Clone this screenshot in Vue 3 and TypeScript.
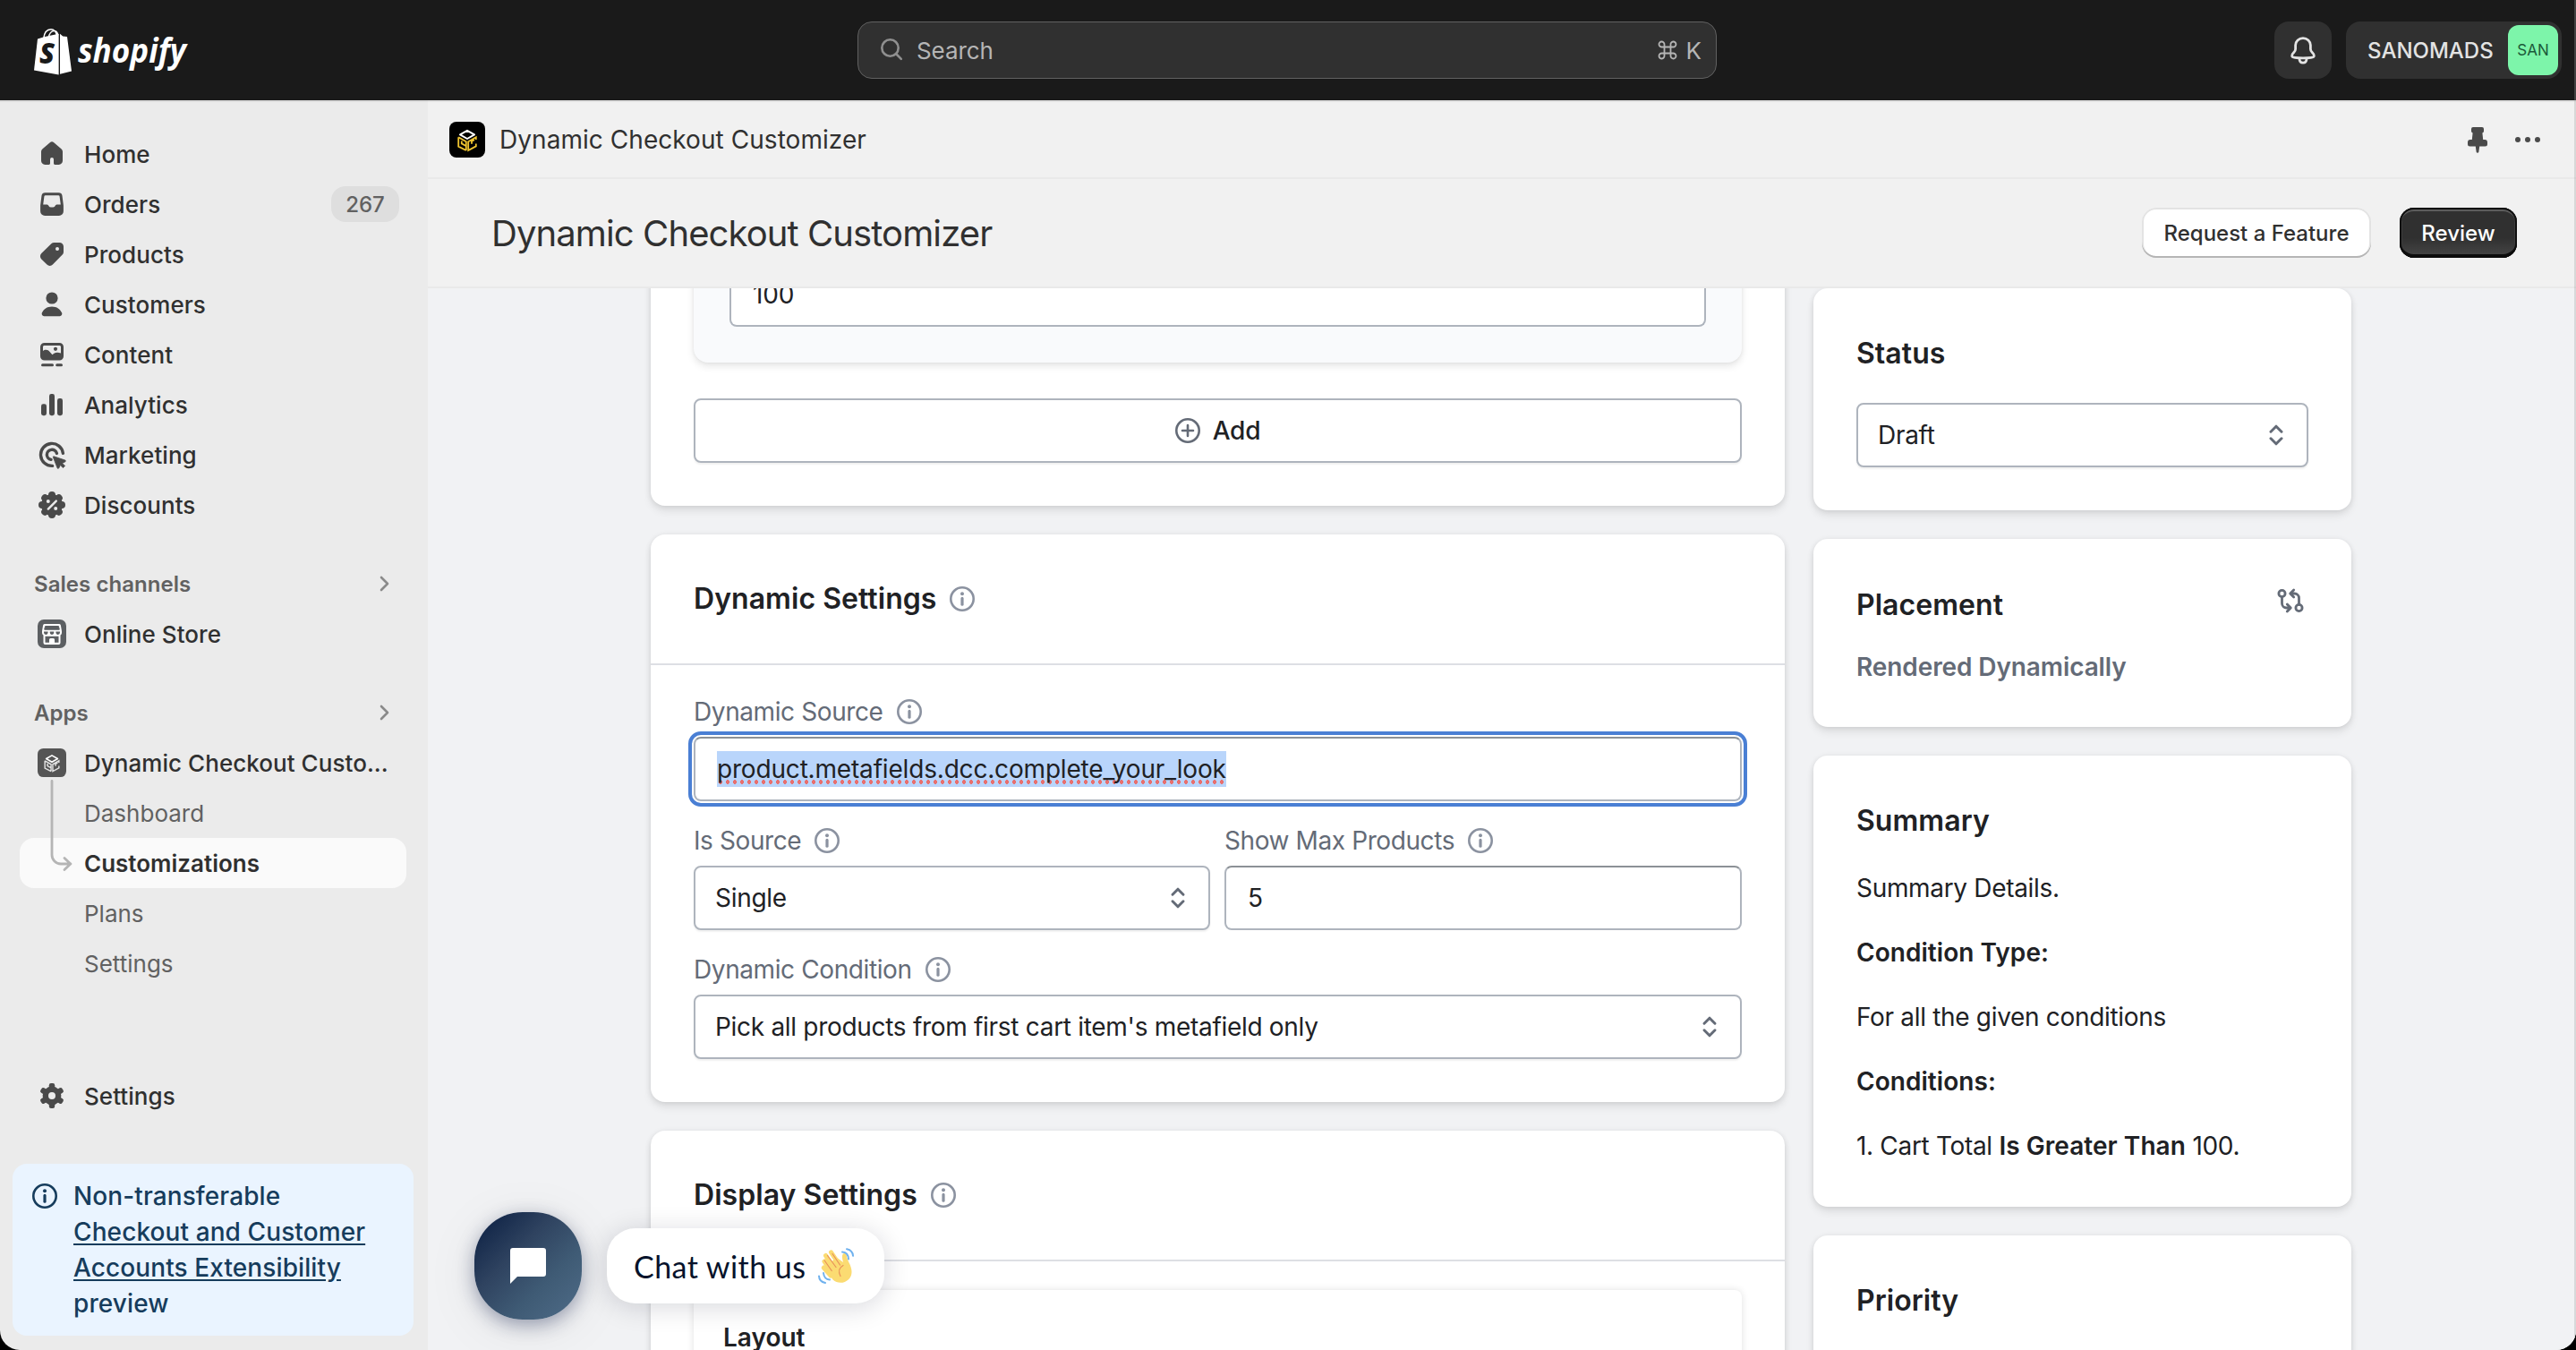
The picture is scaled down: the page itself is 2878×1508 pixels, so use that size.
<script setup lang="ts">
interface NavItem {
  label: string
  icon: string
  badge?: string
}

const nav: NavItem[] = [
  { label: 'Home', icon: 'home' },
  { label: 'Orders', icon: 'orders', badge: '267' },
  { label: 'Products', icon: 'products' },
  { label: 'Customers', icon: 'customers' },
  { label: 'Content', icon: 'content' },
  { label: 'Analytics', icon: 'analytics' },
  { label: 'Marketing', icon: 'marketing' },
  { label: 'Discounts', icon: 'discounts' },
]

const appLinks: { label: string; active?: boolean }[] = [
  { label: 'Dashboard' },
  { label: 'Customizations', active: true },
  { label: 'Plans' },
  { label: 'Settings' },
]

const teeth = [0, 60, 120, 180, 240, 300]
const scallops = [0, 45, 90, 135, 180, 225, 270, 315]
</script>

<template>
  <div class="window">
    <svg class="defs" width="0" height="0" aria-hidden="true">
      <defs>
        <symbol id="i-info" viewBox="0 0 28 28">
          <circle cx="14" cy="14" r="12.7" fill="none" stroke="currentColor" stroke-width="2.6" />
          <circle cx="14" cy="8.2" r="2" fill="currentColor" />
          <rect x="12.4" y="11.8" width="3.2" height="10" rx="1.6" fill="currentColor" />
        </symbol>
        <symbol id="i-updown" viewBox="0 0 20 28">
          <path d="M4 10.2 10 4.2l6 6M4 17.8l6 6 6-6" fill="none" stroke="currentColor" stroke-width="3" stroke-linecap="round" stroke-linejoin="round" />
        </symbol>
        <symbol id="i-chevron" viewBox="0 0 12 18">
          <path d="M2 2l7 7-7 7" fill="none" stroke="currentColor" stroke-width="2.6" stroke-linecap="round" stroke-linejoin="round" />
        </symbol>
        <symbol id="i-cube" viewBox="0 0 40 40">
          <path class="lid" d="M20 9.8l8 4.6-8 4.6-8-4.6z" fill="none" stroke-width="2" stroke-linejoin="round" />
          <path class="side" d="M10.2 17.2v10.4L18.8 32M10.2 17.2l8.6 5V32M18.6 27l-4.8-2.6v-3M29.8 20v-2.8l-8.600 5V32l8.600-4.600v-3M25 24.800v-3l3-1.600" fill="none" stroke-width="1.800" />
        </symbol>
      </defs>
    </svg>

    <header class="topbar">
      <div class="logo">
        <svg width="176" height="56" viewBox="0 0 176 56">
          <path d="M4 11.6l8-2.6 15.6-3.2v45.6L0 46.6z" fill="#fff" />
          <path d="M29 5.8l3.2 2.8 4.8.4L42 47.6l-13 3.2z" fill="#fff" />
          <path d="M10.6 11.6C11.4 4 15 .8 19 .8c3.400 0 5.600 2.600 6.600 7M16.400 10C17 5.400 19.600 2.600 22.400 2.600c2.400 0 3.800 1.800 4.400 4.800" fill="none" stroke="#fff" stroke-width="1.500" />
          <text x="6" y="39" font-family="'Open Sans', sans-serif" font-weight="800" font-style="italic" font-size="32" textLength="17" lengthAdjust="spacingAndGlyphs" fill="#1a1a1a">S</text>
          <text x="49" y="38" font-family="'Open Sans', sans-serif" font-weight="700" font-style="italic" font-size="37.500" textLength="121" lengthAdjust="spacingAndGlyphs" fill="#fff">shopify</text>
        </svg>
      </div>
      <div class="search">
        <svg width="28" height="28" viewBox="0 0 28 28">
          <circle cx="11.500" cy="11.500" r="9.200" fill="none" stroke="#8f8f8f" stroke-width="2.600" />
          <path d="M18.500 18.500l5.300 5.300" stroke="#8f8f8f" stroke-width="2.600" stroke-linecap="round" />
        </svg>
        <span class="search-label">Search</span>
        <svg class="cmd" width="22" height="22" viewBox="0 0 22 22">
          <path d="M7.500 7.500h7v7h-7zM7.500 7.500H4.800a3 3 0 1 1 2.700-3zM14.500 7.500V4.800a3 3 0 1 1 3 2.700zM14.500 14.500h2.700a3 3 0 1 1-2.700 3zM7.500 14.500v2.700a3 3 0 1 1-3-2.700z" fill="none" stroke="#b5b5b5" stroke-width="1.800" />
        </svg>
        <span class="key">K</span>
      </div>
      <div class="top-actions">
        <div class="bell">
          <svg width="40" height="40" viewBox="0 0 40 40">
            <path d="M20 6.600c-4.800 0-8.400 3.600-8.400 8v4.200c0 1.600-.6 2.600-1.800 3.800-1.600 1.600-2.400 2.600-2.200 3.800.2 1.400 1.400 1.800 3.400 2 3 .4 6 .5 9 .5s6-.1 9-.5c2-.2 3.200-.6 3.400-2 .2-1.200-.6-2.200-2.200-3.800-1.200-1.200-1.800-2.200-1.800-3.800v-4.200c0-4.400-3.600-8-8.400-8z" fill="none" stroke="#e3e3e3" stroke-width="2.800" stroke-linejoin="round" />
            <path d="M16 29.500c0 3 1.700 4.700 4 4.700s4-1.700 4-4.700" fill="none" stroke="#e3e3e3" stroke-width="2.800" />
          </svg>
        </div>
        <div class="account">
          <span>SANOMADS</span>
          <div class="avatar">SAN</div>
        </div>
      </div>
    </header>

    <div class="body">
      <aside class="sidebar">
        <div v-for="item in nav" :key="item.label" class="nav-row">
          <svg class="nav-icon" viewBox="0 0 20 20" fill="currentColor">
            <path v-if="item.icon === 'home'" d="M8.900 3.600a1.700 1.700 0 0 1 2.200 0l4.100 3.500c.5.400.8 1 .8 1.700v5c0 1.200-.9 2.200-2.200 2.200h-2.100a.7.700 0 0 1-.7-.7v-2.300a1 1 0 0 0-2 0v2.300a.7.700 0 0 1-.7.700H6.200C4.900 16 4 15 4 13.800v-5c0-.7.3-1.300.8-1.700z" />
            <path v-else-if="item.icon === 'orders'" fill-rule="evenodd" d="M6.200 3.600h7.600a2 2 0 0 1 1.950 1.600l.7 5.500v3.300a2.500 2.500 0 0 1-2.500 2.500h-7.900a2.500 2.500 0 0 1-2.500-2.500v-3.300l.7-5.500a2 2 0 0 1 1.950-1.600zM6.400 5.100a.7.700 0 0 0-.7.600l-.6 4.600h1.900c.6 0 1 .3 1.300.8.200.4.500.6 1 .6h1.400c.5 0 .8-.2 1-.6.300-.5.700-.8 1.300-.8h1.900l-.6-4.600a.7.700 0 0 0-.7-.6z" />
            <path v-else-if="item.icon === 'products'" fill-rule="evenodd" d="M11.300 3.500h2.950a2.250 2.250 0 0 1 2.250 2.250v2.950a2.250 2.250 0 0 1-.66 1.590l-5.400 5.500a2.250 2.250 0 0 1-3.200 0l-3.100-3.100a2.250 2.250 0 0 1 0-3.200l5.500-5.340a2.250 2.250 0 0 1 1.660-.65zM13 6a1 1 0 1 0 0 2 1 1 0 0 0 0-2z" />
            <g v-else-if="item.icon === 'customers'">
              <circle cx="10" cy="6.500" r="3.300" />
              <path d="M10 11.200c2.700 0 4.700 1.400 5.600 3.600.3.900-.3 1.800-1.200 1.800H5.600c-.9 0-1.500-.9-1.200-1.800.9-2.200 2.900-3.600 5.600-3.600z" />
            </g>
            <g v-else-if="item.icon === 'content'">
              <path fill-rule="evenodd" d="M5.800 3.500h8.400a2.300 2.300 0 0 1 2.300 2.300v5.200a2.300 2.300 0 0 1-2.300 2.300H5.800a2.300 2.300 0 0 1-2.300-2.300V5.800a2.300 2.300 0 0 1 2.300-2.300zM5.800 5c-.5 0-.8.3-.8.800v2.200c.5-.4 1-.6 1.700-.6.900 0 1.500.4 2.100 1.100l1.400 1.600 1-.7c1-.7 2.300-.8 3.800-.1V5.800c0-.5-.3-.8-.8-.8z" />
              <circle cx="12" cy="6.900" r="1.050" />
              <rect x="4" y="15.100" width="7" height="1.500" rx=".75" />
              <rect x="12.100" y="15.100" width="3.900" height="1.500" rx=".75" />
            </g>
            <g v-else-if="item.icon === 'analytics'">
              <rect x="4" y="9.600" width="3" height="6.500" rx="1.200" />
              <rect x="8.500" y="4" width="3" height="12.100" rx="1.200" />
              <rect x="13" y="6.500" width="3" height="9.600" rx="1.200" />
            </g>
            <g v-else-if="item.icon === 'marketing'">
              <path d="M16.200 9.200A6.250 6.250 0 1 0 10.300 16.200M12.700 9.200A2.800 2.800 0 1 0 9.500 12.700" fill="none" stroke="currentColor" stroke-width="1.700" stroke-linecap="round" />
              <path d="M11 10.900l6.300 2.100c.5.200.5.700.1.900l-1.600.8 1.500 1.500-1.100 1.100-1.500-1.500-.8 1.600c-.2.400-.8.400-.9-.1l-2.300-5.900c-.1-.3.100-.6.300-.5z" stroke="currentColor" stroke-width=".4" stroke-linejoin="round" />
            </g>
            <g v-else>
              <circle cx="10" cy="10" r="6" />
              <circle v-for="a in scallops" :key="a" cx="10" cy="4.500" r="2" :transform="`rotate(${a} 10 10)`" />
              <g fill="#ebebeb">
                <circle cx="7.900" cy="8" r="1" />
                <circle cx="12.100" cy="12" r="1" />
              </g>
              <path d="M7.900 12.300l4.500-4.500" stroke="#ebebeb" stroke-width="1.200" stroke-linecap="round" />
            </g>
          </svg>
          <span class="nav-label">{{ item.label }}</span>
          <span v-if="item.badge" class="badge">{{ item.badge }}</span>
        </div>

        <div class="section">
          <span>Sales channels</span>
          <svg class="chev" width="12" height="18"><use href="#i-chevron" /></svg>
        </div>
        <div class="nav-row">
          <svg class="app-icon" viewBox="0 0 32 32">
            <rect width="32" height="32" rx="7" fill="#5c5f62" />
            <path d="M8 5h16a2 2 0 0 1 1.900 1.400L27 13v2a3 3 0 0 1-1.500 2.500V26a2 2 0 0 1-2 2h-15a2 2 0 0 1-2-2v-8.500A3 3 0 0 1 5 15v-2l1.100-6.600A2 2 0 0 1 8 5z" fill="#fff" />
            <path d="M8.600 7.500h14.800l.9 3.700H7.700z" fill="#5c5f62" stroke="#5c5f62" stroke-linejoin="round" />
            <path d="M7 13.400h4.600v1.200a2.300 2.300 0 0 1-4.600 0zM13.700 13.400h4.600v1.200a2.300 2.300 0 0 1-4.600 0zM20.400 13.400H25v1.200a2.300 2.300 0 0 1-4.600 0z" fill="#5c5f62" />
            <path d="M8.500 18.800h15v7H19v-3.300a1.500 1.500 0 0 0-1.500-1.500h-3a1.500 1.500 0 0 0-1.500 1.500v3.300H8.500z" fill="#5c5f62" />
          </svg>
          <span class="nav-label">Online Store</span>
        </div>

        <div class="section">
          <span>Apps</span>
          <svg class="chev" width="12" height="18"><use href="#i-chevron" /></svg>
        </div>
        <div class="nav-row">
          <svg class="app-icon" viewBox="0 0 40 40">
            <rect width="40" height="40" rx="8" fill="#555" />
            <g class="cube-mono"><use href="#i-cube" /></g>
          </svg>
          <span class="nav-label">Dynamic Checkout Custo...</span>
        </div>
        <div class="sub">
          <div v-for="l in appLinks" :key="l.label" class="sub-row" :class="{ active: l.active }">{{ l.label }}</div>
          <svg class="tree" width="30" height="112" viewBox="0 0 30 112">
            <path d="M3 1.500V84a10 10 0 0 0 10 10h11M17 87.500l6.800 6.500-6.800 6.500" fill="none" stroke="#b5b5b5" stroke-width="2.800" stroke-linecap="round" stroke-linejoin="round" />
          </svg>
        </div>

        <div class="nav-row settings-row">
          <svg class="nav-icon" viewBox="0 0 20 20" fill="currentColor">
            <circle cx="10" cy="10" r="3.600" fill="none" stroke="currentColor" stroke-width="3.200" />
            <rect v-for="t in teeth" :key="t" x="8.400" y="3" width="3.200" height="4" rx="1.100" :transform="`rotate(${t} 10 10)`" />
          </svg>
          <span class="nav-label">Settings</span>
        </div>

        <div class="notice">
          <svg width="28" height="28"><use href="#i-info" /></svg>
          <p>Non-transferable<br /><u>Checkout and Customer<br />Accounts Extensibility</u><br />preview</p>
        </div>
      </aside>

      <main class="main">
        <div class="appbar">
          <svg class="brand" width="40" height="40" viewBox="0 0 40 40">
            <rect width="40" height="40" rx="8" fill="#000" />
            <g class="cube-color"><use href="#i-cube" /></g>
          </svg>
          <span>Dynamic Checkout Customizer</span>
          <svg class="pin" width="24" height="30" viewBox="0 0 24 30">
            <path d="M7 1h10a2 2 0 0 1 2 2v2.500a2 2 0 0 1-1.600 2L18.200 15h1.600A3 3 0 0 1 23 18v2a2.500 2.500 0 0 1-2.500 2.500h-6.300L13.300 29c-.3 1-2.300 1-2.600 0l-.9-6.500H3.500A2.500 2.500 0 0 1 1 20v-2a3 3 0 0 1 3.200-3h1.600l.8-7.500a2 2 0 0 1-1.600-2V3a2 2 0 0 1 2-2z" fill="#4a4a4a" />
          </svg>
          <svg class="dots" width="28" height="6" viewBox="0 0 28 6" fill="#4a4a4a">
            <circle cx="3" cy="3" r="3" /><circle cx="14" cy="3" r="3" /><circle cx="25" cy="3" r="3" />
          </svg>
        </div>
        <div class="pagehead">
          <h1>Dynamic Checkout Customizer</h1>
          <button class="btn">Request a Feature</button>
          <button class="btn primary">Review</button>
        </div>

        <div class="scroll">
          <div class="col-main">
            <section class="card conditions">
              <div class="inset"><div class="field input">100</div></div>
              <div class="field add">
                <svg width="28" height="28" viewBox="0 0 28 28" fill="none" stroke="#646b77" stroke-width="2.600" stroke-linecap="round">
                  <circle cx="14" cy="14" r="12.700" /><path d="M14 8v12M8 14h12" />
                </svg>
                Add
              </div>
            </section>

            <section class="card">
              <div class="card-head"><h2>Dynamic Settings</h2><svg class="info" width="28" height="28"><use href="#i-info" /></svg></div>
              <div class="card-body">
                <div class="label">Dynamic Source<svg class="info" width="28" height="28"><use href="#i-info" /></svg></div>
                <div class="field input focus"><span class="sel">product.metafields.dcc.complete_your_look</span></div>
                <div class="pair">
                  <div>
                    <div class="label">Is Source<svg class="info" width="28" height="28"><use href="#i-info" /></svg></div>
                    <div class="field select">Single<svg width="20" height="28"><use href="#i-updown" /></svg></div>
                  </div>
                  <div>
                    <div class="label">Show Max Products<svg class="info" width="28" height="28"><use href="#i-info" /></svg></div>
                    <div class="field input">5</div>
                  </div>
                </div>
                <div class="label">Dynamic Condition<svg class="info" width="28" height="28"><use href="#i-info" /></svg></div>
                <div class="field select">Pick all products from first cart item's metafield only<svg width="20" height="28"><use href="#i-updown" /></svg></div>
              </div>
            </section>

            <section class="card">
              <div class="card-head"><h2>Display Settings</h2><svg class="info" width="28" height="28"><use href="#i-info" /></svg></div>
              <div class="layout-box">Layout</div>
            </section>
          </div>

          <div class="col-side">
            <section class="card status">
              <h2>Status</h2>
              <div class="field select">Draft<svg width="20" height="28"><use href="#i-updown" /></svg></div>
            </section>
            <section class="card placement">
              <div class="place-head">
                <h2>Placement</h2>
                <svg width="32" height="30" viewBox="0 0 32 30" fill="none" stroke="#646b77" stroke-width="2.800" stroke-linecap="round" stroke-linejoin="round">
                  <circle cx="6.500" cy="7" r="3.600" /><circle cx="25.500" cy="23" r="3.600" />
                  <path d="M6.500 10.800v7.200a5 5 0 0 0 5 5h3M12.300 19l4 4-4 4M25.500 19.200V12a5 5 0 0 0-5-5h-3M19.700 3l-4 4 4 4" />
                </svg>
              </div>
              <p>Rendered Dynamically</p>
            </section>
            <section class="card summary">
              <h2>Summary</h2>
              <p>Summary Details.</p>
              <p><b>Condition Type:</b></p>
              <p>For all the given conditions</p>
              <p><b>Conditions:</b></p>
              <p>1. Cart Total <b>Is Greater Than</b> 100.</p>
            </section>
            <section class="card priority"><h2>Priority</h2></section>
          </div>
        </div>
      </main>
    </div>

    <div class="chat">
      <div class="chat-btn">
        <svg width="40" height="40" viewBox="0 0 40 40"><path d="M3 0h34a3 3 0 0 1 3 3v26a3 3 0 0 1-3 3H8l-8 8V3a3 3 0 0 1 3-3z" fill="#fff" /></svg>
      </div>
      <div class="chat-pill">
        <span>Chat with us</span>
        <svg width="40" height="40" viewBox="0 0 40 40">
          <g fill="none" stroke="#fbdb72" stroke-width="5" stroke-linecap="round">
            <path d="M7 15l8 12M8.500 8.500l10 15M14.500 4.800l10 15" />
            <path d="M6.200 22l8 9" />
          </g>
          <path d="M8 24l12-14 8 6c-1-4-1.600-7-.4-9 1-1.500 3.400-1 4 .8.600 2.400 1 5 2.600 8 4.500 8.500 4.500 15-.2 19.400-5 4.800-12.500 4.800-17.400.4z" fill="#fbdb72" />
          <path d="M7.200 14l8 11.500M10.500 8.500l9.500 13M16 6.500l8.500 12.500M28 19.500c-4.500 2.500-5.500 7-3 12" fill="none" stroke="#e8925a" stroke-width="1.200" stroke-linecap="round" />
          <path d="M27 4.500c4 .3 6.800 3.200 7 8M32 1.200c4 .8 6.800 3.400 7 7.600M13 35.500c-3.800-.3-6.600-3.200-7-7.500M8 39c-4-.8-6.800-3.400-7-7.600" fill="none" stroke="#6fb1ee" stroke-width="2" stroke-linecap="round" />
        </svg>
      </div>
    </div>
  </div>
</template>

<style>
body {
  background: #000;
}
</style>

<style scoped>
.window {
  position: relative;
  width: 2878px;
  height: 1508px;
  box-sizing: border-box;
  overflow: hidden;
  border-radius: 0 0 22px 22px;
  background: #ebebeb;
  font-family: Inter, 'Liberation Sans', sans-serif;
  color: #303030;
  font-size: 28px;
}
.window::after {
  content: '';
  position: absolute;
  inset: 0 0 0 auto;
  width: 2px;
  background: rgba(160, 160, 160, 0.3);
}
.window * {
  box-sizing: border-box;
}
.defs {
  position: absolute;
}
h1,
h2,
p {
  margin: 0;
}
svg {
  flex: none;
  display: block;
}
.topbar {
  height: 112px;
  background: #1a1a1a;
  display: flex;
  align-items: center;
  padding: 0 16px 0 38px;
}
.logo {
  width: 920px;
  height: 48px;
}
.logo svg {
  overflow: visible;
}
.search {
  width: 960px;
  height: 64px;
  border: 1px solid #616161;
  border-radius: 16px;
  background: #303030;
  display: flex;
  align-items: center;
  padding: 0 16px 0 24px;
  color: #b5b5b5;
  font-size: 26px;
}
.search-label {
  margin-left: 13px;
  flex: 1;
  letter-spacing: -0.1px;
}
.cmd {
  margin-right: 10px;
}
.top-actions {
  margin-left: auto;
  display: flex;
  gap: 16px;
}
.bell {
  width: 64px;
  height: 64px;
  border-radius: 16px;
  background: #303030;
  display: flex;
  align-items: center;
  justify-content: center;
}
.account {
  width: 241px;
  height: 64px;
  border-radius: 16px;
  background: #303030;
  color: #e3e3e3;
  font-size: 24px;
  font-weight: 500;
  display: flex;
  align-items: center;
  justify-content: space-between;
  padding: 0 4px 0 24px;
}
.avatar {
  width: 56px;
  height: 56px;
  border-radius: 12px;
  background: #7df5aa;
  color: #1c5a3a;
  font-size: 17px;
  font-weight: 400;
  display: flex;
  align-items: center;
  justify-content: center;
}
.body {
  display: flex;
  height: 1396px;
}
.sidebar {
  width: 478px;
  border-top: 2px solid #dcdcdc;
  padding-top: 30px;
  display: flex;
  flex-direction: column;
}
.nav-row {
  height: 56px;
  display: flex;
  align-items: center;
  padding: 0 32px 0 38px;
  font-weight: 530;
  font-size: 26px;
  flex: none;
}
.nav-icon {
  width: 40px;
  height: 40px;
  color: #4a4a4a;
}
.nav-label {
  margin-left: 16px;
  white-space: nowrap;
  letter-spacing: 0.05px;
}
.app-icon {
  width: 32px;
  height: 32px;
  margin: 0 4px;
}
.badge {
  margin-left: auto;
  height: 40px;
  width: 76px;
  border-radius: 16px;
  background: #dedede;
  color: #616161;
  font-size: 24px;
  display: flex;
  align-items: center;
  justify-content: center;
}
.section {
  margin-top: 32px;
  height: 56px;
  display: flex;
  align-items: center;
  justify-content: space-between;
  padding: 0 42px 0 38px;
  font-size: 24px;
  font-weight: 600;
  color: #616161;
  letter-spacing: 0.05px;
  flex: none;
}
.chev {
  color: #8a8a8a;
}
.cube-mono {
  stroke: #e3e3e3;
}
.cube-mono .lid,
.cube-mono .side {
  stroke: inherit;
}
.cube-color {
  stroke: #f0c530;
}
.lid {
  stroke: #fff;
}
.sub {
  position: relative;
  padding: 0 24px 0 22px;
}
.sub-row {
  height: 56px;
  display: flex;
  align-items: center;
  padding-left: 72px;
  font-size: 26px;
  color: #616161;
}
.sub-row.active {
  background: #fafafa;
  border-radius: 16px;
  color: #303030;
  font-weight: 600;
}
.tree {
  position: absolute;
  left: 55px;
  top: -9px;
}
.settings-row {
  margin-top: 92px;
}
.notice {
  margin: 48px 16px 0 14px;
  height: 192px;
  border-radius: 16px;
  background: #eaf4ff;
  color: #163c5c;
  display: flex;
  padding: 16px 22px;
}
.notice svg {
  margin-top: 6px;
}
.notice p {
  margin-left: 18px;
  font-size: 28px;
  line-height: 40px;
  font-weight: 500;
  letter-spacing: 0.1px;
  white-space: nowrap;
}
.notice u {
  text-underline-offset: 3px;
}
.main {
  flex: 1;
  min-width: 0;
  display: flex;
  flex-direction: column;
  background: #f1f1f1;
  border-top: 2px solid #e1e1e1;
}
.appbar {
  height: 86px;
  border-bottom: 2px solid #e9e9e9;
  display: flex;
  align-items: center;
  padding: 0 40px 0 24px;
  font-size: 28px;
  font-weight: 430;
  letter-spacing: 0.05px;
  color: #303030;
  flex: none;
}
.brand {
  margin-right: 16px;
}
.pin {
  margin-left: auto;
  margin-right: 30px;
}
.pagehead {
  height: 122px;
  border-bottom: 2px solid #e9e9e9;
  display: flex;
  align-items: center;
  padding: 0 66px 0 71px;
  flex: none;
}
.pagehead h1 {
  font-size: 40px;
  font-weight: 430;
  letter-spacing: -0.9px;
  flex: 1;
}
.btn {
  width: 256px;
  height: 56px;
  border: 0;
  border-radius: 16px;
  background: #fff;
  box-shadow: inset 0 -2px 0 #b5b5b5, inset 0 0 0 2px #e3e3e3;
  font: 500 24px Inter, sans-serif;
  color: #303030;
  padding: 0;
}
.btn.primary {
  width: 131px;
  margin-left: 32px;
  color: #fff;
  background: linear-gradient(#303030 60%, #474747);
  box-shadow: inset 0 -4px 0 #0c0c0c, inset 0 0 0 2px #0f0f0f, inset 0 4px 0 #5c5c5c, inset 3px 0 0 #3c3c3c, inset -3px 0 0 #3c3c3c;
}
.scroll {
  flex: 1;
  min-height: 0;
  overflow: hidden;
  background: #f1f2f4;
  display: flex;
  align-items: flex-start;
  gap: 32px;
  padding-left: 249px;
}
.col-main {
  width: 1267px;
  margin-top: -100px;
  display: flex;
  flex-direction: column;
  gap: 32px;
}
.col-side {
  width: 601px;
  display: flex;
  flex-direction: column;
  gap: 32px;
}
.card {
  background: #fff;
  border-radius: 16px;
  box-shadow: 0 6px 10px rgba(23, 24, 24, 0.08), 0 1px 6px rgba(0, 0, 0, 0.1);
  color: #202124;
}
h2 {
  font-size: 32px;
  font-weight: 640;
  line-height: 40px;
  letter-spacing: 0.05px;
  color: #202124;
}
.field {
  height: 72px;
  border: 2px solid #aeb4bd;
  border-radius: 8px;
  background: #fff;
  display: flex;
  align-items: center;
  font-size: 28px;
  color: #202124;
}
.input {
  padding-left: 24px;
  border-top-color: #8c9196;
  letter-spacing: -0.18px;
}
.select {
  justify-content: space-between;
  padding: 0 24px 0 22px;
  color: #202124;
  letter-spacing: -0.3px;
  box-shadow: 0 2px 2px rgba(0, 0, 0, 0.06);
}
.select svg {
  color: #646b77;
}
.conditions {
  height: 343px;
  padding: 0 48px;
}
.inset {
  height: 183px;
  background: #f9fafc;
  border-radius: 0 0 16px 16px;
  box-shadow: 0 4px 8px rgba(0, 0, 0, 0.1), 0 0 4px rgba(0, 0, 0, 0.06);
  padding: 71px 40px 0;
}
.add {
  margin-top: 40px;
  justify-content: center;
  gap: 14px;
  font-weight: 500;
  letter-spacing: -0.2px;
  box-shadow: 0 2px 2px rgba(0, 0, 0, 0.06);
}
.card-head {
  height: 146px;
  border-bottom: 2px solid #dddfe4;
  display: flex;
  align-items: center;
  padding: 0 48px;
}
.info {
  color: #8b92a0;
  margin-left: 15px;
}
.card-body {
  padding: 32px 48px 48px;
}
.label {
  height: 40px;
  margin-bottom: 8px;
  display: flex;
  align-items: center;
  color: #646b77;
  font-size: 28px;
  letter-spacing: -0.4px;
}
.card-body > .field + .label,
.pair + .label,
.pair {
  margin-top: 24px;
}
.focus {
  outline: 4px solid #4a7fd4;
  outline-offset: 2px;
}
.sel {
  height: 40px;
  line-height: 40px;
  background: radial-gradient(circle, #e8706f 1.900px, transparent 2.300px) 0 32px / 8px 4.500px repeat-x, #b9d5fb;
}
.pair {
  display: grid;
  grid-template-columns: 577px 578px;
  gap: 16px;
}
.layout-box {
  margin: 32px 48px 0;
  height: 200px;
  border-radius: 8px;
  box-shadow: 0 0 8px rgba(0, 0, 0, 0.12);
  padding: 33px;
  line-height: 40px;
  font-weight: 640;
  font-size: 28px;
}
.status {
  height: 248px;
  padding: 53px 48px 0;
}
.status .field {
  margin-top: 35px;
}
.placement {
  height: 210px;
  padding: 54px 48px 0;
}
.place-head {
  display: flex;
  justify-content: space-between;
  padding-right: 4px;
}
.placement p {
  margin-top: 29px;
  line-height: 40px;
  font-weight: 600;
  letter-spacing: -0.1px;
  color: #646b77;
}
.summary {
  height: 504px;
  padding: 53px 48px 0;
}
.summary h2 {
  margin-bottom: 35px;
}
.summary p {
  margin-bottom: 32px;
  line-height: 40px;
  letter-spacing: -0.32px;
}
.summary b {
  font-weight: 640;
  letter-spacing: 0.05px;
}
.priority {
  height: 240px;
  padding: 53px 48px 0;
}
.chat {
  position: absolute;
  left: 530px;
  top: 1354px;
  display: flex;
  align-items: center;
  gap: 28px;
}
.chat-btn {
  width: 120px;
  height: 120px;
  border-radius: 54px;
  background: linear-gradient(135deg, #14284a 12%, #2f4360 38%, #3f5b75 66%, #4f6c88);
  box-shadow: 0 6px 20px rgba(20, 35, 80, 0.38), 0 10px 60px rgba(0, 0, 0, 0.08);
  display: flex;
  align-items: center;
  justify-content: center;
}
.chat-pill {
  width: 310px;
  height: 84px;
  border-radius: 32px;
  background: #fff;
  box-shadow: 0 4px 30px rgba(0, 10, 40, 0.16);
  display: flex;
  align-items: center;
  justify-content: space-between;
  padding: 0 34px 0 30px;
  font-family: Lato, sans-serif;
  font-size: 34px;
  letter-spacing: 0.45px;
  color: #06132b;
  white-space: nowrap;
}
</style>
